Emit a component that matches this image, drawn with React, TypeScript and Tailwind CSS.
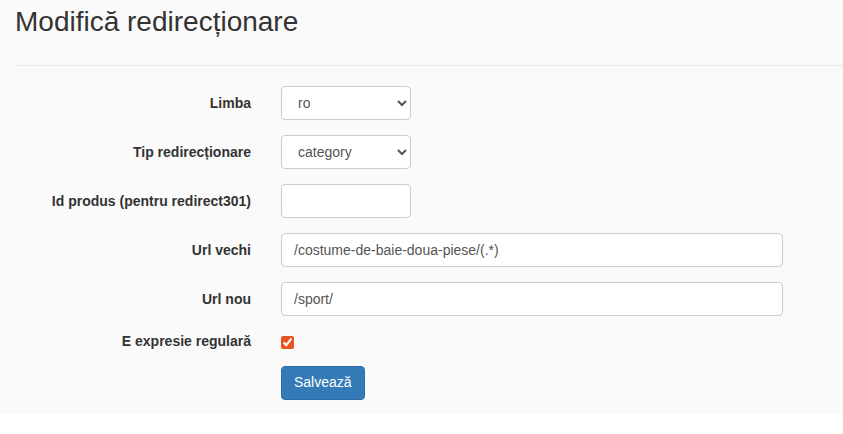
import { useState } from 'react';

const LABEL = 'text-right text-[14px] font-bold text-[#333] leading-5';
const FIELD =
  'h-[34px] rounded-[4px] border border-[#ccc] bg-white px-3 text-[14px] text-[#555] outline-none';

function Row({ label, children }: { label: string; children: React.ReactNode }) {
  return (
    <div className="grid grid-cols-[251px_1fr] items-center gap-x-[30px]">
      <label className={LABEL}>{label}</label>
      <div className="flex">{children}</div>
    </div>
  );
}

export default function App() {
  const [regex, setRegex] = useState(true);

  return (
    <div className="font-['Liberation_Sans',Arial,sans-serif]">
      <div className="h-[414px] bg-[#fafafa]">
        <h1 className="pl-[15px] pt-[7px] text-[28px] font-normal leading-[1.1] text-[#333]">
          Modifică redirecționare
        </h1>

        <div className="ml-[15px] mt-[27px] border-t border-[#eaeaea]" />

        {/* Form */}
        <form className="mt-[20px] flex flex-col gap-[15px]" onSubmit={(e) => e.preventDefault()}>
          <Row label="Limba">
            <select className={`${FIELD} w-[130px]`} defaultValue="ro">
              <option value="ro">ro</option>
              <option value="en">en</option>
            </select>
          </Row>

          <Row label="Tip redirecționare">
            <select className={`${FIELD} w-[130px]`} defaultValue="category">
              <option value="category">category</option>
              <option value="product">product</option>
            </select>
          </Row>

          <Row label="Id produs (pentru redirect301)">
            <input type="text" className={`${FIELD} w-[130px]`} />
          </Row>

          <Row label="Url vechi">
            <input type="text" className={`${FIELD} w-[502px]`} defaultValue="/costume-de-baie-doua-piese/(.*)" />
          </Row>

          <Row label="Url nou">
            <input type="text" className={`${FIELD} w-[502px]`} defaultValue="/sport/" />
          </Row>

          <div className="grid h-5 grid-cols-[251px_1fr] items-center gap-x-[30px]">
            <label className={LABEL}>E expresie regulară</label>
            <div className="flex items-center">
              <input
                type="checkbox"
                checked={regex}
                onChange={(e) => setRegex(e.target.checked)}
                className="m-0 mt-[3px] h-[13px] w-[13px] accent-[#e95420]"
              />
            </div>
          </div>

          <div className="grid grid-cols-[251px_1fr] gap-x-[30px]">
            <div />
            <div className="flex">
              <button
                type="submit"
                className="h-[34px] rounded-[4px] border border-[#2e6da4] bg-[#337ab7] px-3 text-[14px] text-white"
              >
                Salvează
              </button>
            </div>
          </div>
        </form>
      </div>
    </div>
  );
}
